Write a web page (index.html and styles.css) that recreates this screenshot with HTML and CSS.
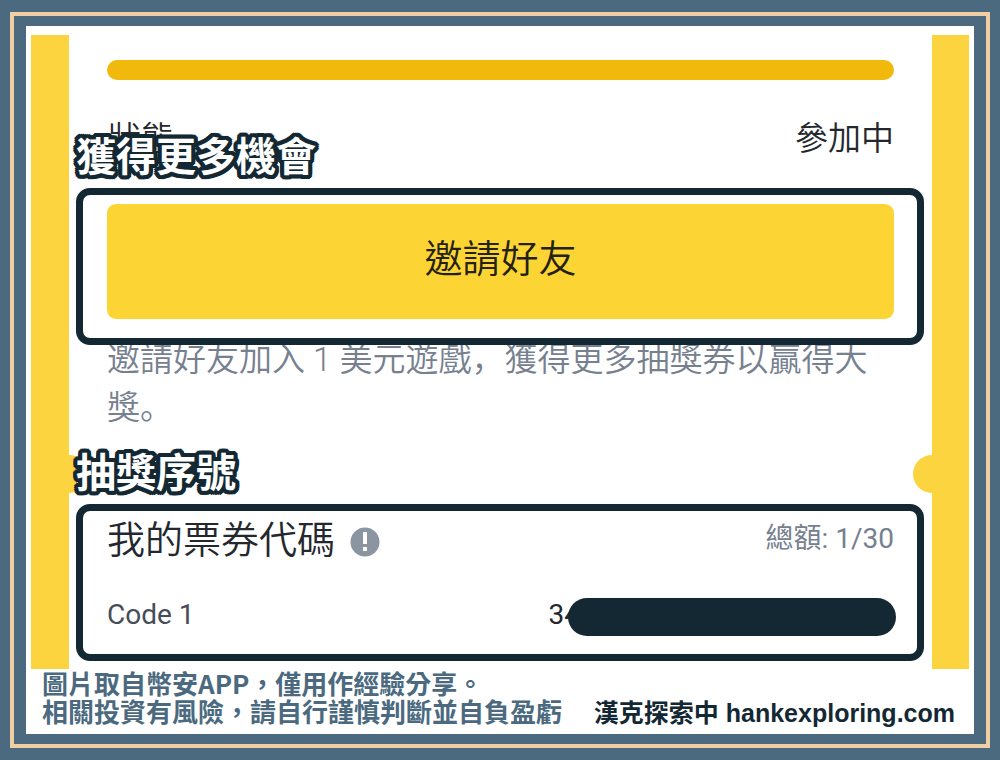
FILE: index.html
```
<!doctype html>
<html lang="zh-Hant">
    <head>
        <meta charset="utf-8">
        <title>抽獎序號</title>
        <link rel="stylesheet" href="styles.css">
    </head>
    <body>
        <div class="frame">
            <div class="panel">
                <main class="ticket">
                    <div class="progress"></div>
                    <div class="status">
                        <span>狀態</span>
                        <span>參加中</span>
                    </div>

                    <h2 class="caption">獲得更多機會</h2>
                    <section class="callout">
                        <button class="invite" type="button">邀請好友</button>
                    </section>
                    <p class="note" lang="zh-Hans">邀請好友加入 1 美元遊戲，獲得更多抽獎券以贏得大獎。</p>

                    <h2 class="caption">抽獎序號</h2>
                    <section class="callout codes">
                        <div class="row">
                            <h3>我的票券代碼</h3>
                            <svg class="info" viewBox="0 0 30 30" aria-hidden="true">
                                <circle cx="15" cy="15" r="14.5" fill="#8b94a1" />
                                <path d="M13 5h4v12h-4zM13 20h4v4h-4z" fill="#fff" />
                            </svg>
                            <span class="total">總額: 1/30</span>
                        </div>
                        <div class="row code">
                            <span class="label">Code 1</span>
                            <span class="value">34</span>
                            <span class="mask"></span>
                        </div>
                    </section>
                </main>
                <footer class="footer">
                    <p class="disclaimer">圖片取自幣安APP，僅用作經驗分享。<br>相關投資有風險，請自行謹慎判斷並自負盈虧</p>
                    <p class="site">漢克探索中 hankexploring.com</p>
                </footer>
            </div>
        </div>
    </body>
</html>
```
FILE: styles.css
```
* {
    box-sizing: border-box;
    margin: 0;
    padding: 0;
}
body {
    display: flex;
    min-height: 100vh;
    padding: 12px 10px;
    background: #4b6a80;
    color: #24272e;
    font-family: Roboto, "Noto Sans CJK SC", sans-serif;
    font-weight: 350;
}
.frame {
    display: flex;
    flex: 1;
    padding: 10px 12px;
    border: 4px solid #f0cfa5;
}
.panel {
    flex: 1;
    padding: 9px 5px 0;
    background: #fff;
}

/* ticket with solid side strips and a round notch on each */
.ticket {
    position: relative;
    padding: 25px 8px 8px 7px;
    border: solid #fbd43f;
    border-width: 0 37px 0 38px;
}
.ticket::before,
.ticket::after {
    content: "";
    position: absolute;
    bottom: 176px;
    width: 38px;
    height: 38px;
    border-radius: 50%;
    background: #fbd43f;
}
.ticket::before {
    left: -19px;
}
.ticket::after {
    right: -19px;
}
.progress {
    height: 20px;
    margin: 0 30px 0 31px;
    border-radius: 10px;
    background: #f0b90b;
}
.status {
    display: flex;
    justify-content: space-between;
    margin: 35px 30px 0 32px;
    font-size: 33px;
    line-height: 48px;
}

/* outlined captions laid over the ticket */
.caption {
    position: relative;
    z-index: 1;
    margin: -29px 0 14px;
    color: #fff;
    font-family: "Noto Sans CJK TC", sans-serif;
    font-size: 40px;
    font-weight: 700;
    line-height: 40px;
    text-shadow:
        4px 0 #142833, -4px 0 #142833, 0 4px #142833, 0 -4px #142833,
        3px 3px #142833, -3px 3px #142833, 3px -3px #142833, -3px -3px #142833,
        4px 2px #142833, -4px 2px #142833, 4px -2px #142833, -4px -2px #142833,
        2px 4px #142833, -2px 4px #142833, 2px -4px #142833, -2px -4px #142833,
        2px 0 #142833, -2px 0 #142833, 0 2px #142833, 0 -2px #142833;
}
.callout {
    position: relative;
    padding: 9px 23px 19px 24px;
    border: 7px solid #142833;
    border-radius: 14px;
    background: #fff;
}
.invite {
    display: block;
    width: 100%;
    height: 115px;
    padding-bottom: 12px;
    border: 0;
    border-radius: 9px;
    background: #fcd535;
    color: #24210f;
    font: inherit;
    font-size: 38px;
    cursor: pointer;
}
.note {
    margin: -9px 24px 0 31px;
    color: #76808f;
    font-size: 33px;
    line-height: 48px;
}
.note + .caption {
    margin-top: 18px;
}

.codes {
    padding-top: 5px;
    padding-bottom: 18px;
}
.row {
    display: flex;
    align-items: flex-start;
    font-size: 28px;
}
.row h3 {
    font-size: 38px;
    font-weight: 350;
    line-height: 48px;
}
.info {
    width: 30px;
    height: 30px;
    margin: 11px 0 0 15px;
}
.total {
    margin-left: auto;
    color: #76808f;
    font-weight: 400;
    line-height: 46px;
}
.code {
    margin-top: 34px;
    font-weight: 400;
    line-height: 34px;
}
.label {
    color: #474d57;
}
.value {
    margin-left: auto;
}
.mask {
    position: relative;
    width: 328px;
    height: 38px;
    margin: 0 -2px 0 -12px;
    border-radius: 19px;
    background: #142833;
}

.footer {
    display: flex;
    justify-content: space-between;
    align-items: flex-end;
    padding: 0 14px 0 11px;
    line-height: 28px;
    font-weight: 700;
}
.disclaimer {
    margin-bottom: 2px;
    color: #4b6a80;
    font-family: "Noto Sans CJK TC", sans-serif;
    font-size: 26px;
}
.site {
    color: #142833;
    font-family: "Liberation Sans", "Noto Sans CJK TC", sans-serif;
    font-size: 25px;
}
```
